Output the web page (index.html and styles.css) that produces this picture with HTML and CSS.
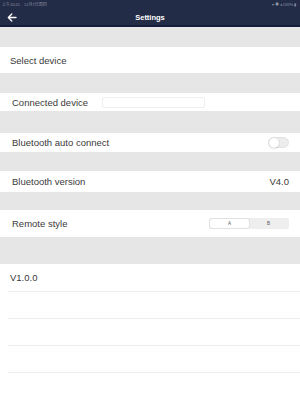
FILE: index.html
```html
<!DOCTYPE html>
<html>
<head>
<meta charset="utf-8">
<link rel="stylesheet" href="styles.css">
</head>
<body>
<div class="app">
  <header class="header">
    <div class="status">
      <span class="status-left">上午10:21　11月7日周四</span>
      <span class="status-right">▾ ◆ ◂ 100% ▮</span>
    </div>
    <div class="nav">
      <svg class="back" width="10" height="9" viewBox="0 0 10 9"><path d="M9 4.5H1.5M4.8 1L1.3 4.5L4.8 8" fill="none" stroke="#fff" stroke-width="1.3" stroke-linecap="round" stroke-linejoin="round"/></svg>
      <span class="title">Settings</span>
    </div>
  </header>
  <div class="gap g20"></div>
  <div class="row r-select"><span class="label">Select device</span></div>
  <div class="gap g20"></div>
  <div class="row r-conn"><span class="label">Connected device</span><span class="input"></span></div>
  <div class="gap g22"></div>
  <div class="row r-auto"><span class="label">Bluetooth auto connect</span><span class="toggle"><span class="knob"></span></span></div>
  <div class="gap g19"></div>
  <div class="row r-ver"><span class="label">Bluetooth version</span><span class="value">V4.0</span></div>
  <div class="gap g18"></div>
  <div class="row r-remote"><span class="label">Remote style</span>
    <span class="seg"><span class="seg-item on">A</span><span class="seg-item">B</span></span>
  </div>
  <div class="gap g27"></div>
  <div class="list">
    <div class="li first"><span class="label">V1.0.0</span></div>
    <div class="li"></div>
    <div class="li"></div>
    <div class="li"></div>
    <div class="li"></div>
  </div>
</div>
</body>
</html>
```
FILE: styles.css
```css
* { box-sizing: border-box; }
html, body { margin: 0; padding: 0; }
body {
  width: 300px;
  height: 400px;
  overflow: hidden;
  background: #fff;
  font-family: "Liberation Sans", Arial, sans-serif;
  color: #3a3a3a;
}
.app { display: flex; flex-direction: column; height: 400px; }
.header {
  height: 27px;
  background: #232c46;
  border-bottom: 2px solid #151b3a;
  display: flex;
  flex-direction: column;
}
.status {
  height: 8px;
  display: flex;
  justify-content: space-between;
  align-items: center;
  padding: 0 4px 0 2px;
  font-size: 4px;
  color: #8a90a4;
  font-family: "Noto Sans CJK SC", "Liberation Sans", sans-serif;
}
.nav {
  flex: 1;
  position: relative;
  display: flex;
  align-items: center;
  justify-content: center;
}
.back { position: absolute; left: 7px; top: 5px; }
.title { color: #fff; font-weight: bold; font-size: 7.5px; margin-top: 2px; }
.gap { background: #e6e6e6; flex: none; }
.g18 { height: 18px; }
.g19 { height: 19px; }
.g20 { height: 20px; }
.g22 { height: 22px; }
.g27 { height: 27px; }
.row {
  background: #fff;
  display: flex;
  align-items: center;
  justify-content: space-between;
  padding: 0 11px 0 12px;
  flex: none;
  font-size: 9.5px;
}
.r-select { height: 26px; padding-left: 10px; }
.r-conn { height: 18px; justify-content: flex-start; }
.r-auto { height: 19px; }
.r-ver { height: 21px; }
.r-remote { height: 27px; }
.label { color: #3a3a3a; white-space: nowrap; }
.input {
  margin-left: 14px;
  width: 103px;
  height: 11px;
  border: 1px solid #efefef;
  border-radius: 2px;
  background: #fff;
}
.toggle {
  width: 21px;
  height: 11px;
  border-radius: 6px;
  background: #ececec;
  border: 1px solid #e2e2e2;
  display: flex;
  align-items: center;
}
.knob {
  width: 10px;
  height: 10px;
  border-radius: 50%;
  background: #fff;
  box-shadow: 0 0.5px 1.5px rgba(0,0,0,0.25);
}
.value { font-size: 9.5px; color: #3a3a3a; }
.seg {
  display: flex;
  width: 80px;
  height: 11px;
  background: #eeeeee;
  border-radius: 2px;
  padding: 1px;
}
.seg-item {
  flex: 1;
  display: flex;
  align-items: center;
  justify-content: center;
  font-size: 4.5px;
  color: #555;
}
.seg-item.on {
  background: #fff;
  border-radius: 2px;
  box-shadow: 0 0 1.5px rgba(0,0,0,0.25);
}
.list { flex: 1; background: #fff; }
.li {
  height: 27px;
  margin-left: 8px;
  border-bottom: 1px solid #ececec;
  display: flex;
  align-items: center;
}
.li.first { height: 28px; }
.li .label { font-size: 9.5px; margin-left: 2px; }
.li:last-child { border-bottom: none; }
```
